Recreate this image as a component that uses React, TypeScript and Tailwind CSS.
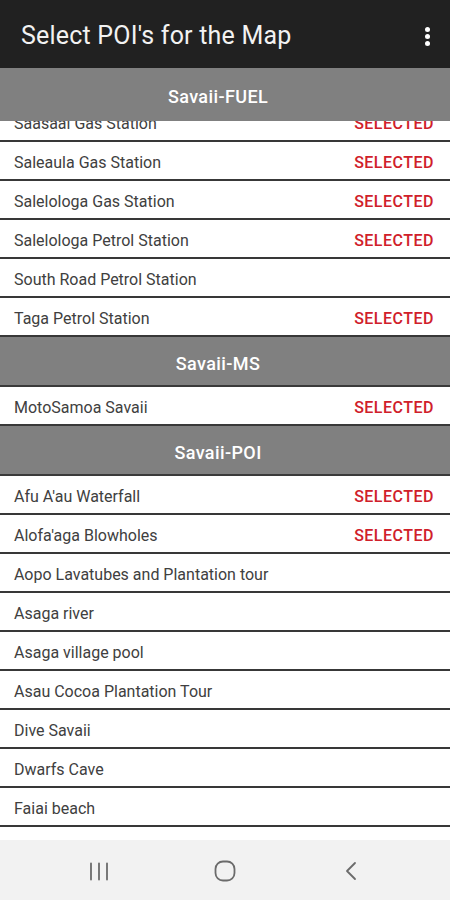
import React from "react";

type Item = { name: string; selected: boolean };

const fuel: Item[] = [
  { name: "Saleaula Gas Station", selected: true },
  { name: "Salelologa Gas Station", selected: true },
  { name: "Salelologa Petrol Station", selected: true },
  { name: "South Road Petrol Station", selected: false },
  { name: "Taga Petrol Station", selected: true },
];

const ms: Item[] = [{ name: "MotoSamoa Savaii", selected: true }];

const poi: Item[] = [
  { name: "Afu A'au Waterfall", selected: true },
  { name: "Alofa'aga Blowholes", selected: true },
  { name: "Aopo Lavatubes and Plantation tour", selected: false },
  { name: "Asaga river", selected: false },
  { name: "Asaga village pool", selected: false },
  { name: "Asau Cocoa Plantation Tour", selected: false },
  { name: "Dive Savaii", selected: false },
  { name: "Dwarfs Cave", selected: false },
  { name: "Faiai beach", selected: false },
];

function Row({ item }: { item: Item }) {
  return (
    <div className="flex h-[39px] shrink-0 items-center justify-between border-b-2 border-[#383838] bg-white pl-[14px] pr-[16px] pt-[4px]">
      <span className="text-[16px] text-[#404040]">{item.name}</span>
      {item.selected && (
        <span className="text-[16px] font-medium tracking-[0.5px] text-[#d0202a]">SELECTED</span>
      )}
    </div>
  );
}

function Header({ title }: { title: string }) {
  return (
    <div className="flex h-[50px] shrink-0 items-center justify-center border-b-2 border-[#3a3a3a] bg-[#808080] pr-[14px] pt-[4px]">
      <span className="text-[18px] font-medium tracking-[0.4px] text-white">{title}</span>
    </div>
  );
}

export default function App() {
  return (
    <div
      className="flex h-[900px] w-[450px] flex-col overflow-hidden bg-white"
      style={{ fontFamily: "Roboto, 'Open Sans', sans-serif" }}
    >
      <div className="flex h-[68px] shrink-0 items-center justify-between bg-[#212121] pl-[21px] pr-[20px] pt-[4px]">
        <span className="text-[25px] tracking-[0.2px] text-[#f2f2f2]">Select POI's for the Map</span>
        <div className="flex flex-col items-center gap-[2px]">
          <span className="block h-[5px] w-[5px] rounded-full bg-white" />
          <span className="block h-[5px] w-[5px] rounded-full bg-white" />
          <span className="block h-[5px] w-[5px] rounded-full bg-white" />
        </div>
      </div>
      <div className="flex h-[53px] shrink-0 items-center justify-center bg-[#808080] pr-[14px] pt-[4px]">
        <span className="text-[18px] font-medium tracking-[0.4px] text-white">Savaii-FUEL</span>
      </div>
      <div className="flex h-[21px] shrink-0 flex-col justify-end overflow-hidden">
        <Row item={{ name: "Saasaai Gas Station", selected: true }} />
      </div>
      {fuel.map((it) => (
        <Row key={it.name} item={it} />
      ))}
      <Header title="Savaii-MS" />
      {ms.map((it) => (
        <Row key={it.name} item={it} />
      ))}
      <Header title="Savaii-POI" />
      {poi.map((it) => (
        <Row key={it.name} item={it} />
      ))}
      <div className="h-[13px] shrink-0 bg-white" />
      <div className="flex flex-1 items-center justify-center bg-[#f2f2f2] pt-[2px]">
        <div className="flex w-[126px] justify-center">
          <svg width="20" height="19" viewBox="0 0 20 19">
            <g stroke="#6b6b6b" strokeWidth="1.8" strokeLinecap="round">
              <line x1="2" y1="1.5" x2="2" y2="17.5" />
              <line x1="10" y1="1.5" x2="10" y2="17.5" />
              <line x1="18" y1="1.5" x2="18" y2="17.5" />
            </g>
          </svg>
        </div>
        <div className="flex w-[126px] justify-center">
          <svg width="22" height="22" viewBox="0 0 22 22">
            <rect x="1.5" y="1.5" width="19" height="19" rx="7.5" fill="none" stroke="#6b6b6b" strokeWidth="1.8" />
          </svg>
        </div>
        <div className="flex w-[126px] justify-center">
          <svg width="14" height="20" viewBox="0 0 14 20">
            <polyline points="11,2 3,10 11,18" fill="none" stroke="#6b6b6b" strokeWidth="1.8" strokeLinecap="round" strokeLinejoin="round" />
          </svg>
        </div>
      </div>
    </div>
  );
}
